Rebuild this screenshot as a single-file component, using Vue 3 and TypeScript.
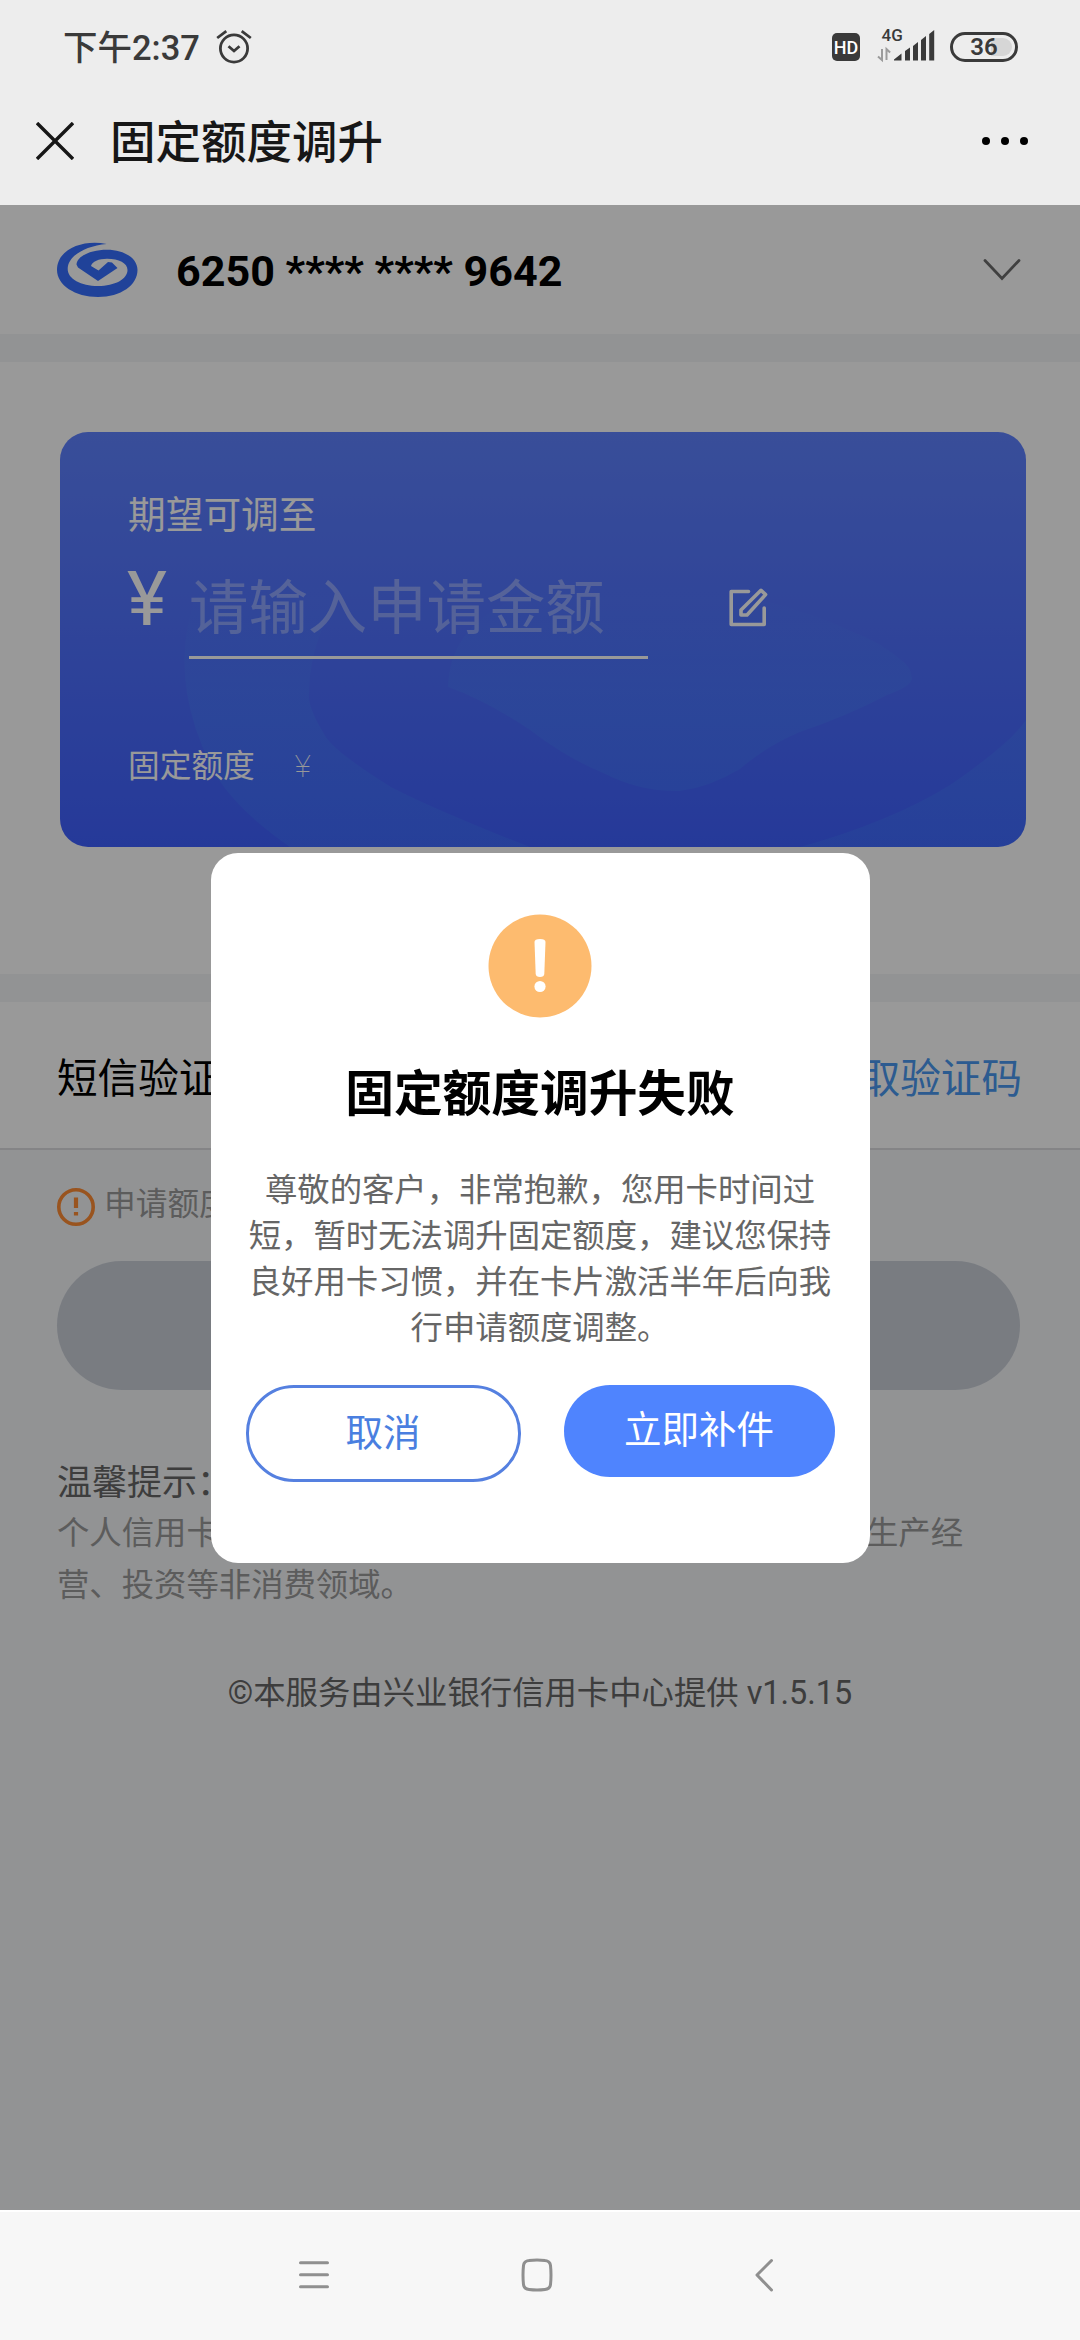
<script setup lang="ts">
import { ref } from 'vue'

const cardNumber = '6250 **** **** 9642'
const amount = ref('')
const noticeLines: string[] = [
  '个人信用卡透支用途仅限于日常消费，不得用于购房以及生产经',
  '营、投资等非消费领域。',
]
const messageLines: string[] = [
  '尊敬的客户，非常抱歉，您用卡时间过',
  '短，暂时无法调升固定额度，建议您保持',
  '良好用卡习惯，并在卡片激活半年后向我',
  '行申请额度调整。',
]
</script>

<template>
  <div class="screen" lang="zh-CN">
    <header class="top">
      <div class="status">
        <span class="clock">下午2:37</span>
        <svg class="alarm" width="36" height="36" viewBox="0 0 36 36" fill="none" stroke="#3a3a3a" stroke-width="2.8">
          <circle cx="18" cy="19.5" r="13.6" />
          <path d="M12.5 17.2l5.5 4.8 5.5-4.8M1.2 9L10.3 2.2M34.8 9l-9.1-6.8" />
        </svg>
        <div class="status-right">
          <span class="hd">HD</span>
          <svg class="signal" width="60" height="46" viewBox="0 -6 60 46" fill="#3a3a3a">
            <text x="5.5" y="13" font-size="17" font-weight="500">4G</text>
            <path d="M6 21v11l-4-3.5M10.5 32V21l3.600 3.500" fill="none" stroke="#9b9b9b" stroke-width="2" />
            <path d="M18 31.500l7.500-6v7h-7.500zM29 23l5-3.500v13h-5zM37 18l5-4v18.500h-5zM45 12l5-4v24.500h-5zM53.200 6l5-4v30.500h-5z" />
          </svg>
          <div class="battery"><i class="level"></i><span>36</span></div>
        </div>
      </div>
      <div class="titlebar">
        <svg class="close" width="38" height="38" viewBox="0 0 38 38" stroke="#171717" stroke-width="3.400">
          <path d="M1 1l36 36M37 1L1 37" />
        </svg>
        <h1>固定额度调升</h1>
        <div class="more"><i></i><i></i><i></i></div>
      </div>
    </header>

    <main class="page">
      <section class="account">
        <svg class="logo" width="81" height="56" viewBox="0 0 81 56" fill="#366fff">
          <path d="M49.700 2C28-3 0 6 0 28c0 15 18 27 41 27s39.500-12 39.500-27C80.500 16 67 7.700 50 7.700 34 7.700 20 14 19.500 22.500L21 25.500l20 13.500L60.500 26 55 20.500l-4-.500-9.500 8.500L34 24c1-4.500 8-7.300 16-7.300 12 0 20.500 4.300 20.500 11.300C70.500 37 58 44 41 44S10.700 37 10.700 27C10.700 14 28 4 49.700 2z" />
        </svg>
        <span class="number">{{ cardNumber }}</span>
        <svg class="chevron" width="38" height="24" viewBox="0 0 38 24" fill="none" stroke="#6b6b6b" stroke-width="2.800" stroke-linecap="round">
          <path d="M2 2.500l17 18 17-18" />
        </svg>
      </section>

      <section class="limit">
        <div class="card">
          <svg class="waves" width="966" height="415" viewBox="0 0 966 415">
            <defs>
              <linearGradient id="wave" gradientUnits="userSpaceOnUse" x1="0" y1="150" x2="0" y2="280">
                <stop offset="0" stop-color="#46c8ff" stop-opacity="0" />
                <stop offset="1" stop-color="#46c8ff" stop-opacity=".1" />
              </linearGradient>
            </defs>
            <g fill="url(#wave)">
              <path d="M140 150Q118 210 127 261 134 305 159 348 180 380 230 415H470Q380 380 331 355 275 320 266 305 247 275 249 261 250 200 290 150z" />
              <path d="M388 255Q425 268 470 298 505 325 543 341 580 360 620 359 650 355 680 337 705 315 740 300 785 285 827 263 850 255 852 247 852 235 840 227 820 210 793 200 690 150 520 150 390 170 388 255z" />
              <path d="M966 288Q950 312 890 353 830 390 740 415H966z" />
            </g>
          </svg>
          <div class="card-body">
            <p class="card-label">期望可调至</p>
            <div class="amount">
              <span class="yen">¥</span>
              <input v-model="amount" placeholder="请输入申请金额" />
              <svg class="edit" width="40" height="40" viewBox="0 0 40 40" fill="none" stroke="#fff" stroke-width="3.600" stroke-linejoin="round" stroke-linecap="round">
                <path d="M20.500 4.500H3.200v33h33V21" />
                <path d="M33 3.300l4.600 4.300L19 28h-6v-5z" />
              </svg>
            </div>
            <p class="fixed"><span>固定额度</span><span class="thin">¥</span></p>
          </div>
        </div>
      </section>

      <section class="sms">
        <span>短信验证码</span>
        <a>获取验证码</a>
      </section>

      <div class="hint">
        <svg width="40" height="40" viewBox="0 0 40 40" fill="none" stroke="#ff8c34">
          <circle cx="20" cy="20" r="17.200" stroke-width="3.600" />
          <path d="M20 10.500v10.500M20 25v3.500" stroke-width="4.200" />
        </svg>
        <span>申请额度</span>
      </div>

      <button class="submit" disabled></button>

      <section class="notice">
        <h2>温馨提示：</h2>
        <p v-for="line in noticeLines" :key="line">{{ line }}</p>
      </section>

      <footer class="copyright">©本服务由兴业银行信用卡中心提供 v1.5.15</footer>

      <div class="mask">
        <div class="dialog">
          <svg class="warn" width="104" height="104" viewBox="0 0 104 104">
            <circle cx="52" cy="52" r="51.500" fill="#fdbb6f" />
            <path d="M46.500 28q0-3 5.500-3t5.500 3l-1.200 32q-.300 3-4.300 3t-4.300-3z" fill="#fff" />
            <circle cx="52" cy="72.500" r="5.600" fill="#fff" />
          </svg>
          <h3>固定额度调升失败</h3>
          <div class="message">
            <p v-for="line in messageLines" :key="line">{{ line }}</p>
          </div>
          <div class="actions">
            <button class="cancel">取消</button>
            <button class="confirm">立即补件</button>
          </div>
        </div>
      </div>
    </main>

    <nav class="navbar">
      <svg width="1080" height="128" viewBox="0 0 1080 128" fill="none" stroke="#8f8f8f" stroke-width="3" stroke-linecap="round" stroke-linejoin="round">
        <path d="M300.500 50.700h27M300.500 62.700h27M300.500 74.700h27" />
        <path d="M529 48.500q8-1 16 0 5 .500 5.500 5 1 9.500 0 19-.500 4.500-5.500 5-8 1-16 0-5-.500-5.500-5-1-9.500 0-19 .500-4.500 5.500-5z" />
        <path d="M771.500 48.500L757 63l14.500 15" />
      </svg>
    </nav>
  </div>
</template>

<style>
body {
  margin: 0;
}
</style>

<style scoped>
* {
  box-sizing: border-box;
  margin: 0;
  padding: 0;
}
.screen {
  display: flex;
  flex-direction: column;
  width: 1080px;
  height: 2340px;
  overflow: hidden;
  font-family: Roboto, 'Noto Sans CJK SC', sans-serif;
}
svg {
  display: block;
  flex: none;
}
.top {
  height: 205px;
  background: #ededed;
}
.status {
  display: flex;
  align-items: center;
  height: 94px;
  padding: 0 62px 0 63px;
}
.clock {
  width: 153px;
  padding-top: 2px;
  font-size: 34.500px;
  font-weight: 500;
  line-height: 40px;
  color: #3a3a3a;
  white-space: nowrap;
}
.status-right {
  display: flex;
  align-items: center;
  margin-left: auto;
}
.hd {
  width: 28px;
  height: 28px;
  margin-right: 16px;
  border-radius: 5px;
  background: #3a3a3a;
  color: #fff;
  font-size: 18px;
  font-weight: 500;
  line-height: 29px;
  text-align: center;
}
.signal {
  margin: -4px 14px 0 0;
}
.battery {
  position: relative;
  width: 68px;
  height: 30px;
  border: 3px solid #3a3a3a;
  border-radius: 15px;
  color: #3a3a3a;
  font-size: 24px;
  font-weight: 600;
  line-height: 25px;
  text-align: center;
}
.battery span {
  position: relative;
}
.level {
  position: absolute;
  top: 3px;
  right: 3px;
  width: 21px;
  height: 18px;
  border-radius: 0 9px 9px 0;
  background: #d6d6d6;
}
.titlebar {
  display: flex;
  align-items: center;
  height: 94px;
  padding: 0 52px 0 36px;
}
h1 {
  margin-left: 36px;
  padding-top: 6px;
  font-size: 45.500px;
  font-weight: 500;
  line-height: 60px;
  color: #171717;
}
.more {
  display: flex;
  gap: 11px;
  margin-left: auto;
}
.more i {
  width: 8px;
  height: 8px;
  border-radius: 50%;
  background: #000;
}
.page {
  position: relative;
  height: 2005px;
  background: #f3f5f7;
}
.account {
  display: flex;
  align-items: center;
  height: 129px;
  padding: 0 59px 0 57px;
  background: #fff;
}
.number {
  margin-left: 38px;
  padding-top: 3px;
  font-size: 43.100px;
  font-weight: 700;
  color: #000;
}
.chevron {
  margin-left: auto;
}
.limit {
  height: 612px;
  margin-top: 28px;
  padding: 70px 54px 0 60px;
  background: #fff;
}
.card {
  position: relative;
  height: 415px;
  overflow: hidden;
  border-radius: 28px;
  background: linear-gradient(#5f82ff, #3f60ff);
  color: #fff;
}
.waves {
  position: absolute;
  inset: 0;
}
.card-body {
  position: relative;
  padding: 58px 68px 0;
}
.card-label {
  font-size: 37.700px;
  line-height: 50px;
}
.amount {
  display: flex;
  height: 116px;
  margin-top: 4px;
}
.yen {
  width: 61px;
  margin-left: -1px;
  margin-right: 1px;
  font-size: 76px;
  line-height: 110px;
}
input {
  width: 459px;
  height: 115px;
  padding-top: 18px;
  border: 0;
  border-bottom: 3px solid #fff;
  background: none;
  outline: 0;
  font-family: inherit;
  font-size: 59.400px;
}
input::placeholder {
  color: rgba(255, 255, 255, 0.35);
}
.edit {
  margin: 43px 0 0 80px;
}
.fixed {
  display: flex;
  margin-top: 85px;
  font-size: 31.700px;
  line-height: 44px;
}
.thin {
  margin-left: 40px;
  font-weight: 100;
}
.sms {
  display: flex;
  justify-content: space-between;
  align-items: center;
  height: 148px;
  margin-top: 28px;
  padding: 0 58px 0 57px;
  border-bottom: 2px solid #dcdddf;
  background: #fff;
  color: #000;
  font-size: 40.600px;
}
.sms a {
  color: #4a98f0;
}
.hint {
  display: flex;
  align-items: center;
  height: 111px;
  padding: 2px 0 0 56px;
  color: #999;
  font-size: 31.700px;
}
.hint span {
  margin: -11px 0 0 8px;
}
.submit {
  display: block;
  width: 963px;
  height: 129px;
  margin-left: 57px;
  border: 0;
  border-radius: 65px;
  background: #cacfd8;
}
.notice {
  padding: 70px 57px 0;
  color: #999;
  font-size: 32.370px;
  line-height: 51.500px;
  white-space: nowrap;
}
.notice h2 {
  font-size: 35px;
  font-weight: 400;
  line-height: 48px;
  color: #666;
}
.copyright {
  margin-top: 56px;
  color: #666;
  font-size: 32.370px;
  line-height: 52px;
  text-align: center;
}
.mask {
  position: absolute;
  inset: 0;
  background: rgba(0, 0, 0, 0.4);
}
.dialog {
  display: flex;
  flex-direction: column;
  align-items: center;
  width: 659px;
  height: 710px;
  margin: 648px 0 0 210.500px;
  padding-top: 61px;
  border-radius: 27px;
  background: #fff;
}
h3 {
  margin-top: 47px;
  font-size: 48.700px;
  font-weight: 700;
  line-height: 60px;
  color: #000;
}
.message {
  margin-top: 42px;
  color: #666;
  font-size: 32.370px;
  line-height: 46px;
  text-align: center;
  white-space: nowrap;
}
.actions {
  display: flex;
  align-items: flex-start;
  gap: 43px;
  margin-top: 34px;
}
.actions button {
  border-radius: 48px;
  font-family: inherit;
  font-size: 37.500px;
}
.cancel {
  width: 275px;
  height: 97px;
  padding-bottom: 9px;
  border: 3px solid #5580e0;
  background: #fff;
  color: #4a7fe0;
}
.confirm {
  width: 271px;
  height: 92px;
  padding-bottom: 9px;
  border: 0;
  background: #4f84fe;
  color: #fff;
}
.navbar {
  height: 130px;
  border-top: 2px solid #fff;
  background: #f7f7f7;
}
</style>
